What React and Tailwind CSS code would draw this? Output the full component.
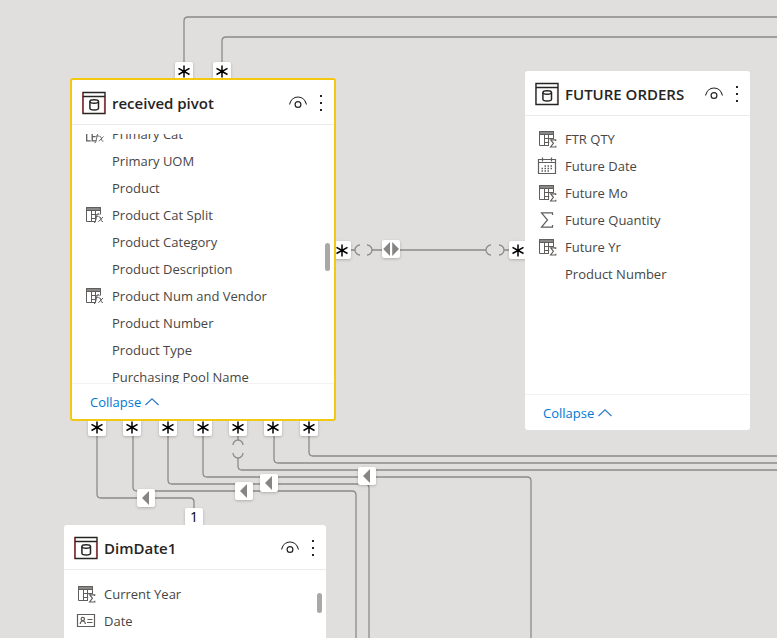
const tables = [
  {
    name: "received pivot",
    frame: "left-[70px] top-[78px] w-[266px] h-[343px] border-2 border-[#f2c811]",
    list: "mt-[9px] flex-1",
    offset: "-mt-[14px]",
    thumb: "right-1 top-[163px] h-7",
    collapse: true,
    fields: [
      { name: "Primary Cat", icon: "lefx" },
      { name: "Primary UOM" },
      { name: "Product" },
      { name: "Product Cat Split", icon: "tablefx" },
      { name: "Product Category" },
      { name: "Product Description" },
      { name: "Product Num and Vendor", icon: "tablefx" },
      { name: "Product Number" },
      { name: "Product Type" },
      { name: "Purchasing Pool Name" },
    ],
  },
  {
    name: "FUTURE ORDERS",
    frame: "left-[525px] top-[71px] w-[225px] h-[359px]",
    list: "mt-[9px] flex-1",
    collapse: true,
    fields: [
      { name: "FTR QTY", icon: "tablesum" },
      { name: "Future Date", icon: "calendar" },
      { name: "Future Mo", icon: "tablesum" },
      { name: "Future Quantity", icon: "sum" },
      { name: "Future Yr", icon: "tablesum" },
      { name: "Product Number" },
    ],
  },
  {
    name: "DimDate1",
    frame: "left-[64px] top-[525px] w-[262px] h-[343px]",
    list: "mt-[10px] flex-1",
    thumb: "right-1 top-[68px] h-5",
    fields: [
      { name: "Current Year", icon: "tablesum" },
      { name: "Date", icon: "card" },
    ],
  },
];

const connectors = [
  "M184 70V21q0 -4 4 -4H2400",
  "M222 70V41q0 -4 4 -4H2400",
  "M97 430V494q0 4 4 4H190q4 0 4 4V515",
  "M133 430V487q0 4 4 4H352q4 0 4 4V2000",
  "M168 430V480q0 4 4 4H365q4 0 4 4V2000",
  "M203 430V473q0 4 4 4H527q4 0 4 4V2000",
  "M238 430V440M238 458V466q0 4 4 4H2400",
  "M274 430V459q0 4 4 4H2400",
  "M309 430V452q0 4 4 4H2400",
  "M345 250H355M372 250H486M504 250H515",
];

const gaps = [
  "M233 445a5 5 0 0 1 10 0",
  "M233 453a5 5 0 0 0 10 0",
  "M360 245a5 5 0 0 0 0 10",
  "M367 245a5 5 0 0 1 0 10",
  "M491 245a5 5 0 0 0 0 10",
  "M499 245a5 5 0 0 1 0 10",
];

const badges = [
  { kind: "many", pos: "left-[175px] top-[62px]" },
  { kind: "many", pos: "left-[213px] top-[62px]" },
  { kind: "many", pos: "left-[333px] top-[241px]" },
  { kind: "many", pos: "left-[509px] top-[241px]" },
  { kind: "many", pos: "left-[88px] top-[418px]" },
  { kind: "many", pos: "left-[123px] top-[418px]" },
  { kind: "many", pos: "left-[159px] top-[418px]" },
  { kind: "many", pos: "left-[194px] top-[418px]" },
  { kind: "many", pos: "left-[229px] top-[418px]" },
  { kind: "many", pos: "left-[264px] top-[418px]" },
  { kind: "many", pos: "left-[300px] top-[418px]" },
  { kind: "one", pos: "left-[185px] top-[508px]" },
  { kind: "both", pos: "left-[382px] top-[240px]" },
  { kind: "single", pos: "left-[137px] top-[489px]" },
  { kind: "single", pos: "left-[235px] top-[482px]" },
  { kind: "single", pos: "left-[260px] top-[474px]" },
  { kind: "single", pos: "left-[358px] top-[467px]" },
];

function Badge({ kind, pos }) {
  return (
    <div className={`absolute ${pos} flex h-[18px] w-[18px] items-center justify-center rounded-[2px] bg-white shadow-[0_1px_3px_rgba(0,0,0,0.22)]`}>
      {kind === "one" && <span className="text-[14px] leading-[18px] text-black">1</span>}
      {kind === "many" && (
        <svg className="h-[18px] w-[18px]" viewBox="0 0 18 18" fill="none" stroke="#000" strokeWidth="1.5">
          <path d="M9 3.500v12M3.500 6.300l11 6.200M14.500 6.300L3.500 12.500" />
        </svg>
      )}
      {kind === "single" && (
        <svg className="h-[18px] w-[18px]" viewBox="0 0 18 18" fill="#868583">
          <path d="M5 9l7-7v14z" />
        </svg>
      )}
      {kind === "both" && (
        <svg className="h-[18px] w-[18px]" viewBox="0 0 18 18" fill="#868583">
          <path d="M1.200 9L8 2v14zM17 9l-6.800-7v14z" />
        </svg>
      )}
    </div>
  );
}

function TableGrid() {
  return (
    <g transform="translate(0 1)">
      <path d="M0 0h15v3H0z" fill="#8a8886" stroke="none" />
      <path d="M0.500 0.500h14v3H0.500zM0.500 3v11.500h9.500M14.500 3v6M5.500 3.500v11M9.500 3.500v11M5.500 7.500h9M5.500 11.500h5" strokeWidth="1" />
    </g>
  );
}

function FieldIcon({ type }) {
  if (!type) return <span className="w-[18px] shrink-0" />;
  return (
    <svg className="h-[18px] w-[18px] shrink-0 overflow-visible" viewBox="0 0 18 18" fill="none" stroke="#605e5c" strokeWidth="1.2">
      {type === "lefx" && (
        <>
          <path d="M0.700 7.500v8.400h4M6.200 7.500v8.400h4M6.200 8h4M6.200 11.700h3.500" strokeWidth="1.300" />
          <path d="M13.700 8.300q-2-.8-2.500 2l-1.200 6q-.4 1.800-1.500 1.400M10.200 11h3M13.500 11.500q1.200-.5 1.600 1l.8 3q.4 1.200 1.500.6M17.500 11.500l-4.600 4.800" strokeWidth="0.900" />
        </>
      )}
      {type === "tablefx" && (
        <>
          <TableGrid />
          <path d="M10.500 8.500h8v9.500h-8z" fill="#fff" stroke="none" />
          <path d="M13.200 7.700q-2-.8-2.500 2l-1.200 5.500q-.4 1.800-1.500 1.400M9.700 10.300h3M13 11q1.200-.5 1.600 1l.8 2.800q.4 1.200 1.500.6M17 11l-4.600 4.800" strokeWidth="1" />
        </>
      )}
      {type === "tablesum" && (
        <>
          <TableGrid />
          <path d="M10.500 9h8v9h-8z" fill="#fff" stroke="none" />
          <path d="M16.700 11V9.800h-5l2.700 3.500-2.800 3.700h5.200v-1.200" />
        </>
      )}
      {type === "calendar" && (
        <>
          <path d="M-0.500 2.500h17v14h-17zM-0.500 5.500h17M3.500 0.500v4M12.500 0.500v4" />
          <path d="M5.500 9h8M2.500 11.500h11M2.500 14h8" strokeDasharray="1.500 1.500" strokeWidth="1.400" />
        </>
      )}
      {type === "sum" && <path d="M13.500 4V1.800H2.500l6 7.200-6 7.200h11V14" />}
      {type === "card" && (
        <>
          <path d="M-0.500 2.500h17v12h-17z" />
          <circle cx="4.800" cy="7" r="1.700" />
          <path d="M2.200 12q.3-3 2.600-3t2.600 3M9.500 7.500h5M9 10.500h5.500" />
        </>
      )}
    </svg>
  );
}

function TableCard({ table }) {
  return (
    <section className={`absolute ${table.frame} flex flex-col overflow-hidden rounded-[3px] bg-white`}>
      <header className="flex h-[45px] shrink-0 items-center border-b border-[#edebe9] pt-px pr-[11px] pl-[10px]">
        <svg className="h-6 w-6 shrink-0" viewBox="0 0 24 24" fill="none" stroke="#252423">
          <path d="M1 1.500h22v21H1z" strokeWidth="1.400" />
          <path d="M1 5.500h22" strokeWidth="1.400" />
          <path d="M0.400 1.500v21M22.400 6v16" stroke="#a4262c" strokeWidth="0.600" />
          <ellipse cx="12.200" cy="10.500" rx="4.300" ry="1.700" strokeWidth="1.500" />
          <path d="M7.900 10.500v6.800c0 2.300 8.600 2.300 8.600 0v-6.800" strokeWidth="1.500" />
        </svg>
        <h2 className="ml-[6px] flex-1 text-[15px] leading-5 font-semibold whitespace-nowrap text-[#252423]">{table.name}</h2>
        <button aria-label="Toggle visibility" className="mr-3 shrink-0">
          <svg className="block h-[14px] w-[18px]" viewBox="0 0 18 14" fill="none" stroke="#252423">
            <path d="M0.500 8.500C1.500 4 5 1 9 1s7.500 3 8.500 7.500" strokeWidth="1.100" />
            <circle cx="9" cy="8.500" r="2.900" strokeWidth="1.200" />
          </svg>
        </button>
        <button aria-label="More options" className="shrink-0">
          <svg className="block h-4 w-1" viewBox="0 0 4 16" fill="#252423">
            <path d="M1 0h2v2H1zM1 7h2v2H1zM1 14h2v2H1z" />
          </svg>
        </button>
      </header>

      <div className={`${table.list} overflow-hidden`}>
        <ul className={table.offset}>
          {table.fields.map((field) => (
            <li key={field.name} className="flex h-[27px] items-center gap-2 pl-[14px]">
              <FieldIcon type={field.icon} />
              <span className="text-[13px] leading-5 whitespace-nowrap text-[#484644]">{field.name}</span>
            </li>
          ))}
        </ul>
      </div>
      {table.thumb && <div className={`absolute ${table.thumb} w-[5px] rounded-full bg-[#a9a8a7]`} />}

      {table.collapse && (
        <footer className="flex h-9 shrink-0 items-center border-t border-[#f3f2f1] pl-[18px]">
          <button className="flex items-center gap-1 text-[13px] leading-5 text-[#0078d4]">
            Collapse
            <svg className="h-2 w-[14px]" viewBox="0 0 14 8" fill="none" stroke="#2b78c8" strokeWidth="1.100">
              <path d="M0.500 7L7 0.800 13.500 7" />
            </svg>
          </button>
        </footer>
      )}
    </section>
  );
}

export default function App() {
  return (
    <main className="relative h-screen overflow-hidden bg-[#e0dfdd] font-['Open_Sans','Noto_Sans',sans-serif]">
      {/* Relationship lines */}
      <svg className="absolute inset-0 h-full w-full" fill="none" stroke="#8c8b89" strokeWidth="1.300">
        {connectors.map((d) => (
          <path key={d} d={d} />
        ))}
        {gaps.map((d) => (
          <path key={d} d={d} />
        ))}
      </svg>

      {badges.map((badge) => (
        <Badge key={badge.pos} {...badge} />
      ))}

      {tables.map((table) => (
        <TableCard key={table.name} table={table} />
      ))}
    </main>
  );
}
